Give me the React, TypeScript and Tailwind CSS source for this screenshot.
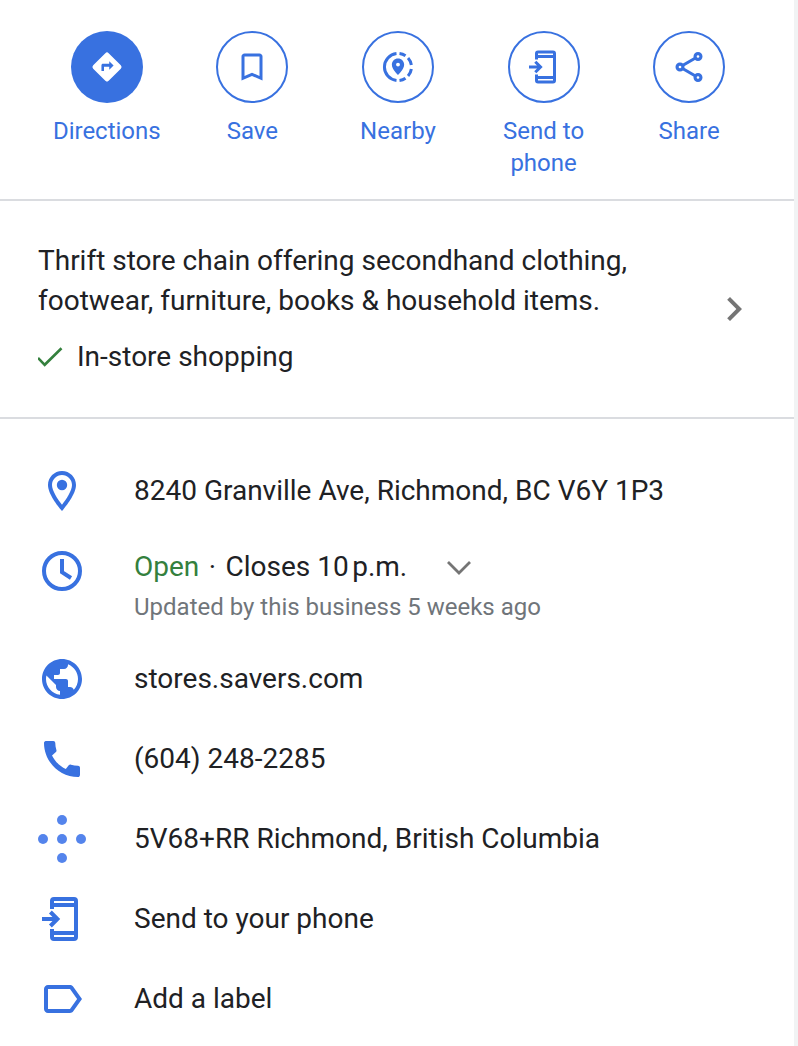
import type { ReactNode } from "react";

function Icon({ className, children }: { className: string; children: ReactNode }) {
  return (
    <svg viewBox="0 0 24 24" fill="currentColor" className={className} aria-hidden="true">
      {children}
    </svg>
  );
}

const sendToPhone = (
  <g fill="none" stroke="currentColor" strokeWidth="2">
    <path d="M7 7V3a1 1 0 0 1 1-1h10a1 1 0 0 1 1 1v18a1 1 0 0 1-1 1H8a1 1 0 0 1-1-1v-4" />
    <path d="M7 5h12M7 19h12M2 12h8M6.2 8.5 9.7 12l-3.5 3.5" />
  </g>
);

const directions = (
  <>
    <path d="M10.9 2.8a1.55 1.55 0 0 1 2.2 0l8.1 8.1a1.55 1.55 0 0 1 0 2.2l-8.1 8.1a1.55 1.55 0 0 1-2.2 0l-8.1-8.1a1.55 1.55 0 0 1 0-2.2z" />
    <path className="fill-[#3871e0]" d="M8.3 14.7v-3.8c0-.6.4-1 1-1h4.2V8.1l2.9 2.9-2.9 2.9v-2.1H10v2.9z" />
  </>
);

const bookmark = (
  <path d="M17 3H7c-1.1 0-2 .9-2 2v16l7-3 7 3V5c0-1.1-.9-2-2-2zm0 15-5-2.18L7 18V5h10v13z" />
);

const nearby = (
  <>
    <path
      fill="none"
      stroke="currentColor"
      strokeWidth="2"
      d="M11 3.05a9 9 0 0 0 0 17.9M13 3.05a9 9 0 0 1 4 1.5M18.7 6a9 9 0 0 1 2.2 4.7M20.9 13.3a9 9 0 0 1-2.2 4.7M17 19.45a9 9 0 0 1-4 1.5"
    />
    <path
      fillRule="evenodd"
      d="M12 6.4c-2.3 0-4.1 1.8-4.1 4.1 0 3 4.1 6.9 4.1 6.9s4.1-3.9 4.1-6.9c0-2.3-1.8-4.1-4.1-4.1zm0 5.3a1.3 1.3 0 1 1 0-2.6 1.3 1.3 0 0 1 0 2.6z"
    />
  </>
);

const share = (
  <g fill="none" stroke="currentColor" strokeWidth="2.1">
    <circle cx="6" cy="12" r="1.95" />
    <circle cx="18" cy="5" r="1.95" />
    <circle cx="18" cy="19" r="1.95" />
    <path d="m7.7 11 8.6-5M7.7 13l8.6 5" />
  </g>
);

const pin = (
  <>
    <path d="M12 2C8.13 2 5 5.13 5 9c0 5.25 7 13 7 13s7-7.75 7-13c0-3.87-3.13-7-7-7zM7 9c0-2.76 2.24-5 5-5s5 2.24 5 5c0 2.88-2.88 7.19-5 9.88C9.92 16.21 7 11.85 7 9z" />
    <circle cx="12" cy="9" r="2.6" />
  </>
);

const clock = (
  <g fill="none" stroke="currentColor" strokeWidth="2">
    <circle cx="12" cy="12" r="9" />
    <path d="M12 6v6.6l4.5 2.9" />
  </g>
);

const globe = (
  <path d="M12 2C6.48 2 2 6.48 2 12s4.48 10 10 10 10-4.48 10-10S17.52 2 12 2zm-1 17.93c-3.95-.49-7-3.85-7-7.93 0-.62.08-1.21.21-1.79L9 15v1c0 1.1.9 2 2 2v1.93zm6.9-2.54c-.26-.81-1-1.39-1.9-1.39h-1v-3c0-.55-.45-1-1-1H8v-2h2c.55 0 1-.45 1-1V7h2c1.1 0 2-.9 2-2v-.41c2.93 1.19 5 4.06 5 7.41 0 2.08-.8 3.97-2.1 5.39z" />
);

const phone = (
  <path d="M20.01 15.38c-1.23 0-2.42-.2-3.53-.56-.35-.12-.74-.03-1.01.24l-1.57 1.97c-2.83-1.35-5.48-3.9-6.89-6.83l1.95-1.66c.27-.28.35-.67.24-1.02-.37-1.11-.56-2.3-.56-3.53 0-.54-.45-.99-.99-.99H4.19C3.65 3 3 3.24 3 3.99 3 13.28 10.73 21 20.01 21c.71 0 .99-.63.99-1.18v-3.45c0-.54-.45-.99-.99-.99z" />
);

const plusCode = (
  <g className="fill-[#5484ec]">
    <circle cx="12" cy="2.5" r="2.5" />
    <circle cx="2.5" cy="12" r="2.5" />
    <circle cx="12" cy="12" r="2.5" />
    <circle cx="21.5" cy="12" r="2.5" />
    <circle cx="12" cy="21.5" r="2.5" />
  </g>
);

const label = (
  <path d="M17.63 5.84C17.27 5.33 16.67 5 16 5L5 5.01C3.9 5.01 3 5.9 3 7v10c0 1.1.9 1.99 2 1.99L16 19c.67 0 1.27-.33 1.63-.84L22 12l-4.37-6.16zM16 17H5V7h11l3.55 5L16 17z" />
);

function Action({ icon, text, filled = false }: { icon: ReactNode; text: string; filled?: boolean }) {
  return (
    <button className="flex flex-1 flex-col items-center">
      <span
        className={
          filled
            ? "flex size-[72px] items-center justify-center rounded-full bg-[#3871e0] text-white"
            : "flex size-[72px] items-center justify-center rounded-full border-2 border-[#3871e0]"
        }
      >
        <Icon className="size-9">{icon}</Icon>
      </span>
      <span className="mt-3 w-[116px] text-2xl leading-8">{text}</span>
    </button>
  );
}

function Row({ icon, children }: { icon: ReactNode; children: ReactNode }) {
  return (
    <li className="flex h-20 items-start pt-4 pl-[38px]">
      <Icon className="size-12 shrink-0 text-[#3871e0]">{icon}</Icon>
      <span className="ml-12 leading-[48px] whitespace-nowrap">{children}</span>
    </li>
  );
}

export default function App() {
  return (
    <div className="h-[1046px] w-[798px] overflow-hidden border-r-4 border-[#f1f3f4] bg-white font-[Roboto,sans-serif] text-[28px] text-[#202124]">
      <section className="flex h-[201px] items-start border-b-2 border-[#dadce0] pt-[31px] pr-8 pl-[34px] text-[#3871e0]">
        <Action icon={directions} text="Directions" filled />
        <Action icon={bookmark} text="Save" />
        <Action icon={nearby} text="Nearby" />
        <Action icon={sendToPhone} text="Send to phone" />
        <Action icon={share} text="Share" />
      </section>

      <section className="flex h-[218px] items-center justify-between border-b-2 border-[#dadce0] pr-9 pl-[38px]">
        <div>
          <p className="w-[610px] leading-10">
            Thrift store chain offering secondhand clothing, footwear, furniture, books &amp; household items.
          </p>
          <div className="mt-4 flex h-10 items-center">
            <svg viewBox="0 0 25 22" className="h-[22px] w-[25px] text-[#34803d]" fill="none" stroke="currentColor" strokeWidth="2.6">
              <path d="m0 12 6.7 6.8L23.5 2.3" />
            </svg>
            <span className="ml-3.5">In-store shopping</span>
          </div>
        </div>
        <Icon className="size-12 text-[#757575]">
          <path d="M10 6 8.59 7.41 13.17 12l-4.58 4.59L10 18l6-6z" />
        </Icon>
      </section>

      <ul className="pt-8">
        <Row icon={pin}>8240 Granville Ave, Richmond, BC V6Y 1P3</Row>
        <li className="flex h-[108px] items-start pt-4 pl-[38px]">
          <Icon className="size-12 shrink-0 text-[#3871e0]">{clock}</Icon>
          <div className="ml-12">
            <div className="flex h-10 items-center whitespace-pre">
              <span className="text-[#34803d]">Open</span>
              <span className="mx-[2.5px]"> · </span>
              <span>Closes 10&#8239;p.m.</span>
              <svg viewBox="0 0 24 14" className="mt-px ml-10 h-3.5 w-6 text-[#757575]" fill="none" stroke="currentColor" strokeWidth="2.8">
                <path d="m1 1 11 11L23 1" />
              </svg>
            </div>
            <div className="text-2xl leading-10 text-[#70757a]">Updated by this business 5 weeks ago</div>
          </div>
        </li>
        <Row icon={globe}>stores.savers.com</Row>
        <Row icon={phone}>(604) 248-2285</Row>
        <Row icon={plusCode}>5V68+RR Richmond, British Columbia</Row>
        <Row icon={sendToPhone}>Send to your phone</Row>
        <Row icon={label}>Add a label</Row>
      </ul>
    </div>
  );
}
